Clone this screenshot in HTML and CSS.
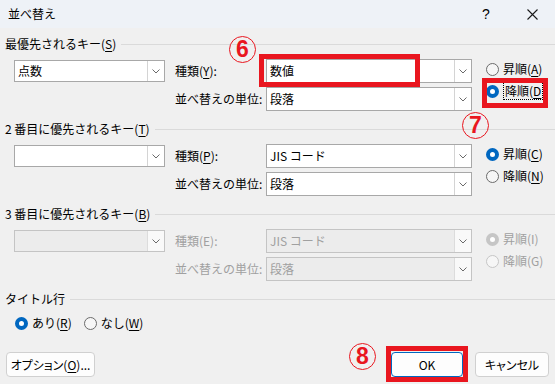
FILE: index.html
```html
<!DOCTYPE html>
<html lang="ja">
<head>
    <meta charset="UTF-8">
    <title>並べ替え</title>
    <link rel="stylesheet" href="styles.css">
</head>
<body>

    <div class="dialog">
        <div class="titlebar">
            <span class="title">並べ替え</span>
            <span class="tb-btn">?</span>
            <span class="tb-btn">
                <svg width="11" height="11" viewBox="0 0 11 11"><path d="M0.5 0.5L10.5 10.5M10.5 0.5L0.5 10.5" stroke="#1a1a1a" stroke-width="1.1" fill="none"/></svg>
            </span>
        </div>

        <div class="content">
            <!-- 最優先されるキー -->
            <div class="group">
                <div class="group-head"><span>最優先されるキー(<u>S</u>)</span><i class="rule"></i></div>
                <div class="key-grid">
                    <div class="combo key"><span class="val">点数</span><span class="drop"><svg width="8" height="5" viewBox="0 0 8 5"><path d="M0.5 0.5L4 4L7.5 0.5" stroke="#6a6a6a" fill="none"/></svg></span></div>
                    <span class="lbl r1">種類(<u>Y</u>):</span>
                    <div class="combo r1"><span class="val">数値</span><span class="drop"><svg width="8" height="5" viewBox="0 0 8 5"><path d="M0.5 0.5L4 4L7.5 0.5" stroke="#6a6a6a" fill="none"/></svg></span></div>
                    <div class="order">
                        <div class="radio"><span class="dot"></span><span>昇順(<u>A</u>)</span></div>
                        <div class="radio"><span class="dot on"></span><span><span class="focus">降順(<u>D</u></span>)</span></div>
                    </div>
                    <span class="lbl r2">並べ替えの単位:</span>
                    <div class="combo r2"><span class="val">段落</span><span class="drop"><svg width="8" height="5" viewBox="0 0 8 5"><path d="M0.5 0.5L4 4L7.5 0.5" stroke="#6a6a6a" fill="none"/></svg></span></div>
                </div>
            </div>

            <!-- 2 番目 -->
            <div class="group">
                <div class="group-head"><span>2&nbsp;番目に優先されるキー(<u>T</u>)</span><i class="rule"></i></div>
                <div class="key-grid">
                    <div class="combo key"><span class="val"></span><span class="drop"><svg width="8" height="5" viewBox="0 0 8 5"><path d="M0.5 0.5L4 4L7.5 0.5" stroke="#6a6a6a" fill="none"/></svg></span></div>
                    <span class="lbl r1">種類(<u>P</u>):</span>
                    <div class="combo r1"><span class="val">JIS コード</span><span class="drop"><svg width="8" height="5" viewBox="0 0 8 5"><path d="M0.5 0.5L4 4L7.5 0.5" stroke="#6a6a6a" fill="none"/></svg></span></div>
                    <div class="order">
                        <div class="radio"><span class="dot on"></span><span>昇順(<u>C</u>)</span></div>
                        <div class="radio"><span class="dot"></span><span>降順(<u>N</u>)</span></div>
                    </div>
                    <span class="lbl r2">並べ替えの単位:</span>
                    <div class="combo r2"><span class="val">段落</span><span class="drop"><svg width="8" height="5" viewBox="0 0 8 5"><path d="M0.5 0.5L4 4L7.5 0.5" stroke="#6a6a6a" fill="none"/></svg></span></div>
                </div>
            </div>

            <!-- 3 番目 (無効) -->
            <div class="group disabled">
                <div class="group-head"><span>3&nbsp;番目に優先されるキー(<u>B</u>)</span><i class="rule"></i></div>
                <div class="key-grid">
                    <div class="combo key"><span class="val"></span><span class="drop"><svg width="8" height="5" viewBox="0 0 8 5"><path d="M0.5 0.5L4 4L7.5 0.5" stroke="#6a6a6a" fill="none"/></svg></span></div>
                    <span class="lbl r1">種類(E):</span>
                    <div class="combo r1"><span class="val">JIS コード</span><span class="drop"><svg width="8" height="5" viewBox="0 0 8 5"><path d="M0.5 0.5L4 4L7.5 0.5" stroke="#6a6a6a" fill="none"/></svg></span></div>
                    <div class="order">
                        <div class="radio"><span class="dot on"></span><span>昇順(I)</span></div>
                        <div class="radio"><span class="dot"></span><span>降順(G)</span></div>
                    </div>
                    <span class="lbl r2">並べ替えの単位:</span>
                    <div class="combo r2"><span class="val">段落</span><span class="drop"><svg width="8" height="5" viewBox="0 0 8 5"><path d="M0.5 0.5L4 4L7.5 0.5" stroke="#6a6a6a" fill="none"/></svg></span></div>
                </div>
            </div>

            <!-- タイトル行 -->
            <div class="group-head"><span>タイトル行</span><i class="rule"></i></div>
            <div class="title-opts">
                <div class="radio"><span class="dot on"></span><span>あり(<u>R</u>)</span></div>
                <div class="radio"><span class="dot"></span><span>なし(<u>W</u>)</span></div>
            </div>

            <div class="actions">
                <button class="btn opt">オプション(<u>O</u>)...</button>
                <span class="spacer"></span>
                <button class="btn ok">OK</button>
                <button class="btn cancel">キャンセル</button>
            </div>
        </div>

        <!-- 注釈 -->
        <div class="mark box6"></div>
        <div class="mark box7"></div>
        <div class="mark box8"></div>
        <div class="num n6">6</div>
        <div class="num n7">7</div>
        <div class="num n8">8</div>
    </div>

</body>
</html>
```

FILE: styles.css
```css
body {
    margin: 0;
    font-family: "Noto Sans CJK JP", "Noto Sans", sans-serif;
    font-size: 12px;
    line-height: 16px;
    color: #000;
    background-color: #f0f0f0;
}

.dialog {
    position: relative;
    width: 555px;
    height: 384px;
    background-color: #f0f0f0;
    overflow: hidden;
}

.titlebar {
    display: flex;
    align-items: center;
    height: 28px;
    background-color: #eef2f7;
}

.title {
    flex: 1;
    padding-left: 8px;
}

.tb-btn {
    display: flex;
    align-items: center;
    justify-content: center;
    width: 46px;
    height: 28px;
    font-family: "Liberation Sans", sans-serif;
    font-size: 14px;
}

.content {
    padding: 8px 0 0 5px;
}

u {
    text-decoration: underline;
    text-underline-offset: 2px;
}

.group-head {
    display: flex;
    align-items: center;
    height: 16px;
}

.rule {
    flex: 1;
    height: 1px;
    margin-left: 5px;
    background-color: #dadada;
}

.key-grid {
    display: grid;
    grid-template-columns: 151px 101px 206px 1fr;
    grid-template-rows: 24px 24px;
    row-gap: 4px;
    margin: 7px 0 10px 9px;
}

.key {
    grid-column: 1;
    grid-row: 1;
    align-self: center;
    height: 22px;
}

.lbl {
    grid-column: 2;
    align-self: center;
    padding-left: 10px;
}

.combo.r1, .combo.r2 {
    grid-column: 3;
}

.r1 { grid-row: 1; }
.r2 { grid-row: 2; }

.combo {
    display: flex;
    box-sizing: border-box;
    border: 1px solid #a8a8a8;
    background-color: #fff;
}

.combo .val {
    flex: 1;
    padding-left: 3px;
    display: flex;
    align-items: center;
    white-space: nowrap;
}

.combo .drop {
    display: flex;
    align-items: center;
    justify-content: center;
    width: 16px;
    border-left: 1px solid #d4d4d4;
    background-color: #fff;
}

.order {
    grid-column: 4;
    grid-row: 1 / 3;
    display: flex;
    flex-direction: column;
    gap: 2px;
    padding-left: 14px;
}

.radio {
    display: flex;
    align-items: center;
    gap: 4px;
    height: 20px;
    white-space: nowrap;
}

.dot {
    box-sizing: border-box;
    width: 13px;
    height: 13px;
    border: 1px solid #6b6b6b;
    border-radius: 50%;
    background-color: #f6f6f6;
}

.dot.on {
    border: 4px solid #0067c0;
    background-color: #fff;
}

.focus {
    border: 1px dotted #000;
    padding: 0 1px;
    line-height: 15px;
}

.disabled .lbl,
.disabled .combo .val,
.disabled .radio {
    color: #a0a0a0;
}

.disabled .combo {
    border-color: #c4c4c4;
    background-color: #ececec;
}

.disabled .combo .drop {
    background-color: #f9f9f9;
    border-left-color: #dcdcdc;
}

.disabled .dot {
    border-color: #c6c6c6;
    background-color: #f6f6f6;
}

.disabled .dot.on {
    border: 4px solid #c6c6c6;
    background-color: #fff;
}

.title-opts {
    display: flex;
    gap: 12px;
    margin: 8px 0 0 10px;
    height: 16px;
    align-items: center;
}

.actions {
    display: flex;
    gap: 12px;
    margin-top: 21px;
    padding-right: 6px;
}

.spacer {
    flex: 1;
}

.btn {
    height: 25px;
    box-sizing: border-box;
    padding: 0;
    font-family: inherit;
    font-size: 12px;
    font-feature-settings: "palt";
    white-space: nowrap;
    color: #000;
    background-color: #fdfdfd;
    border: 1px solid #d0d0d0;
    border-radius: 4px;
}

.opt {
    width: 89px;
    margin-left: 1px;
}

.ok {
    width: 72px;
    border-color: #0067c0;
}

.cancel {
    width: 74px;
}

.mark {
    position: absolute;
    box-sizing: border-box;
    border: 5px solid #e9161f;
}

.box6 { left: 259px; top: 54px; width: 161px; height: 33px; }
.box7 { left: 482px; top: 78px; width: 66px; height: 30px; }
.box8 { left: 386px; top: 346px; width: 82px; height: 36px; }

.num {
    position: absolute;
    box-sizing: border-box;
    display: flex;
    align-items: center;
    justify-content: center;
    width: 27px;
    height: 27px;
    border: 1.2px solid #e9161f;
    border-radius: 50%;
    color: #e9161f;
    font-family: "Liberation Sans", sans-serif;
    font-weight: bold;
    font-size: 23px;
    line-height: 1;
}

.n6 { left: 229px; top: 36px; }
.n7 { left: 462px; top: 112px; }
.n8 { left: 349px; top: 343px; }
```
